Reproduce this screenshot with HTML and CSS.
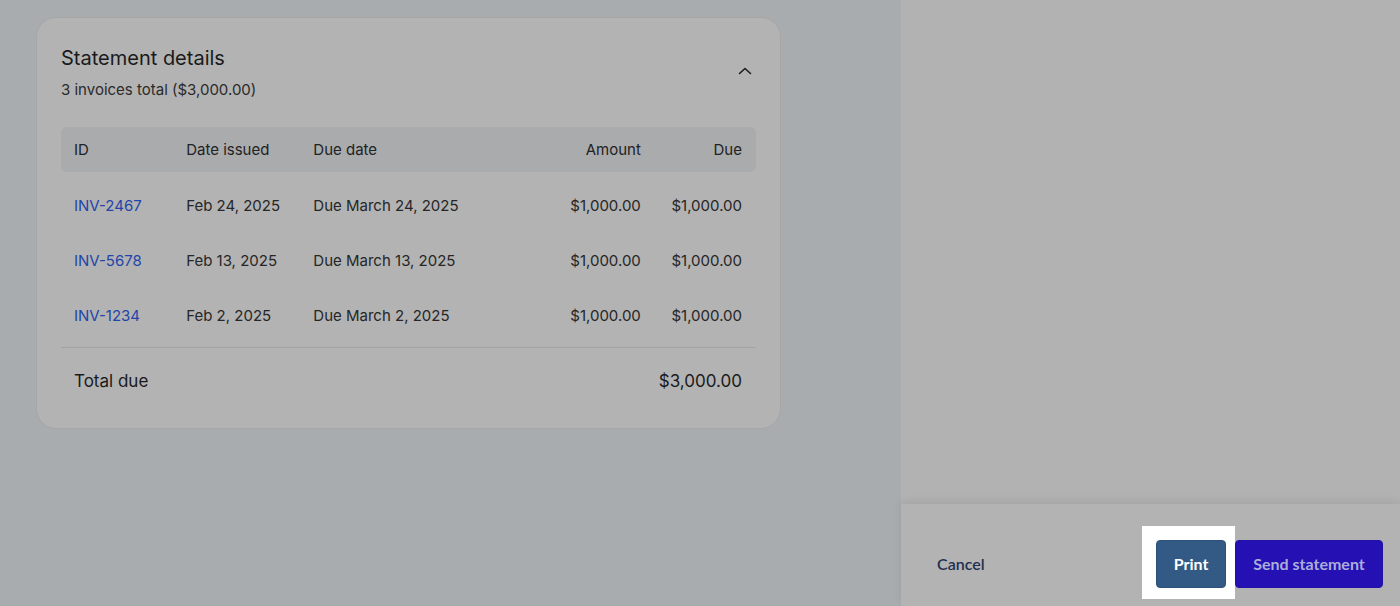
FILE: index.html
```html
<!DOCTYPE html>
<html lang="en">
<head>
<meta charset="utf-8">
<title>Statement</title>
<link rel="stylesheet" href="styles.css">
</head>
<body>
<div class="page">
  <main class="main">
    <section class="card">
      <div class="card-head">
        <div>
          <h2 class="title">Statement details</h2>
          <p class="subtitle">3 invoices total ($3,000.00)</p>
        </div>
        <button class="toggle" aria-label="Collapse">
          <svg width="14" height="8" viewBox="0 0 14 8"><path d="M1.5 6.5 L7 1.5 L12.5 6.5" fill="none" stroke="#1c1c1c" stroke-width="1.6" stroke-linecap="round" stroke-linejoin="round"/></svg>
        </button>
      </div>
      <table class="table">
        <colgroup>
          <col class="c-id">
          <col class="c-date">
          <col class="c-due">
          <col class="c-amt">
          <col class="c-rem">
        </colgroup>
        <thead>
          <tr>
            <th>ID</th>
            <th>Date issued</th>
            <th>Due date</th>
            <th class="num">Amount</th>
            <th class="num">Due</th>
          </tr>
        </thead>
        <tbody>
          <tr class="spacer"><td colspan="5"></td></tr>
          <tr>
            <td><a class="link" href="#">INV-2467</a></td>
            <td>Feb 24, 2025</td>
            <td>Due March 24, 2025</td>
            <td class="num">$1,000.00</td>
            <td class="num">$1,000.00</td>
          </tr>
          <tr>
            <td><a class="link" href="#">INV-5678</a></td>
            <td>Feb 13, 2025</td>
            <td>Due March 13, 2025</td>
            <td class="num">$1,000.00</td>
            <td class="num">$1,000.00</td>
          </tr>
          <tr>
            <td><a class="link" href="#">INV-1234</a></td>
            <td>Feb 2, 2025</td>
            <td>Due March 2, 2025</td>
            <td class="num">$1,000.00</td>
            <td class="num">$1,000.00</td>
          </tr>
          <tr class="spacer spacer-end"><td colspan="5"></td></tr>
        </tbody>
        <tfoot>
          <tr>
            <td colspan="3">Total due</td>
            <td colspan="2" class="num">$3,000.00</td>
          </tr>
        </tfoot>
      </table>
    </section>
  </main>
  <aside class="panel">
    <div class="panel-body"></div>
    <footer class="panel-footer">
      <button class="btn-text">Cancel</button>
      <div class="actions">
        <span class="spot"><button class="btn btn-print">Print</button></span>
        <button class="btn btn-send">Send statement</button>
      </div>
    </footer>
  </aside>
</div>
</body>
</html>
```

FILE: styles.css
```css
* { box-sizing: border-box; }
html, body { margin: 0; padding: 0; height: 100%; }
body {
  font-family: Inter, "Liberation Sans", sans-serif;
  color: #1e1e1e;
  background: #a8acaf;
  overflow: hidden;
}
.page {
  display: flex;
  height: 606px;
}
.main {
  width: 901px;
  flex: none;
  background: #a8acaf;
  padding: 17px 120px 0 36px;
}
.card {
  background: #b3b3b3;
  border: 1px solid #a6a6a6;
  border-radius: 20px;
  padding: 26px 24px 15px 24px;
}
.card-head {
  display: flex;
  justify-content: space-between;
  align-items: flex-start;
}
.title {
  margin: 0;
  font-size: 20px;
  font-weight: 400;
  line-height: 28px;
  color: #1a1a1a;
}
.subtitle {
  margin: 7px 0 0;
  font-size: 15px;
  line-height: 22px;
  color: #2a2a2a;
}
.toggle {
  border: 0;
  background: none;
  padding: 0;
  margin: 23px 4px 0 0;
  width: 14px;
  height: 8px;
  display: flex;
}
.table {
  width: 100%;
  table-layout: fixed;
  margin-top: 26px;
  border-collapse: separate;
  border-spacing: 0;
  font-size: 15px;
  color: #262626;
}
.c-id { width: 125px; }
.c-date { width: 127px; }
.c-due { width: 200px; }
.c-amt { width: 141px; }
.c-rem { width: 101px; }
.table th {
  background: #aaabad;
  font-weight: 400;
  text-align: left;
  height: 45px;
  padding: 0 14px 0 0;
  color: #222;
}
.table th:first-child { border-radius: 6px 0 0 6px; padding-left: 13px; }
.table th:last-child { border-radius: 0 6px 6px 0; }
.table td {
  height: 55px;
  padding: 0 14px 0 0;
  white-space: nowrap;
}
.table td:first-child { padding-left: 13px; }
.table .spacer td { height: 6px; padding: 0; }
.table .spacer-end td { height: 4px; }
.table .num { text-align: right; }
.link {
  color: #2345aa;
  text-decoration: none;
}
.table tfoot td {
  border-top: 1px solid #a3a3a3;
  height: 66px;
  font-size: 17px;
  color: #1a1a1a;
}
.panel {
  flex: 1;
  display: flex;
  flex-direction: column;
  background: #b3b3b3;
}
.panel-body {
  flex: 1;
  background: #b2b2b2;
}
.panel-footer {
  height: 102px;
  flex: none;
  display: flex;
  align-items: center;
  justify-content: space-between;
  padding: 17px 17px 0 36px;
  background: #b3b3b3;
  box-shadow: 0 -3px 8px rgba(0, 0, 0, 0.07);
  position: relative;
}
.btn-text {
  border: 0;
  background: none;
  padding: 0;
  font-family: Lato, "Liberation Sans", sans-serif;
  font-size: 16px;
  font-weight: 600;
  color: #1f3050;
}
.actions {
  display: flex;
  gap: 9px;
}
.spot {
  position: relative;
  display: flex;
}
.spot::before {
  content: "";
  position: absolute;
  top: -14px;
  left: -14px;
  right: -9px;
  bottom: -11px;
  background: #ffffff;
}
.btn {
  position: relative;
  height: 48px;
  border-radius: 4px;
  border: 1px solid transparent;
  font-family: Lato, "Liberation Sans", sans-serif;
  font-size: 16px;
  font-weight: 700;
  padding: 0 16px;
}
.btn-print {
  width: 70px;
  background: #335a85;
  border-color: #2e5178;
  color: #ffffff;
}
.btn-send {
  width: 148px;
  background: #2410b3;
  border-color: #2210a8;
  color: #aaaedb;
}
```
